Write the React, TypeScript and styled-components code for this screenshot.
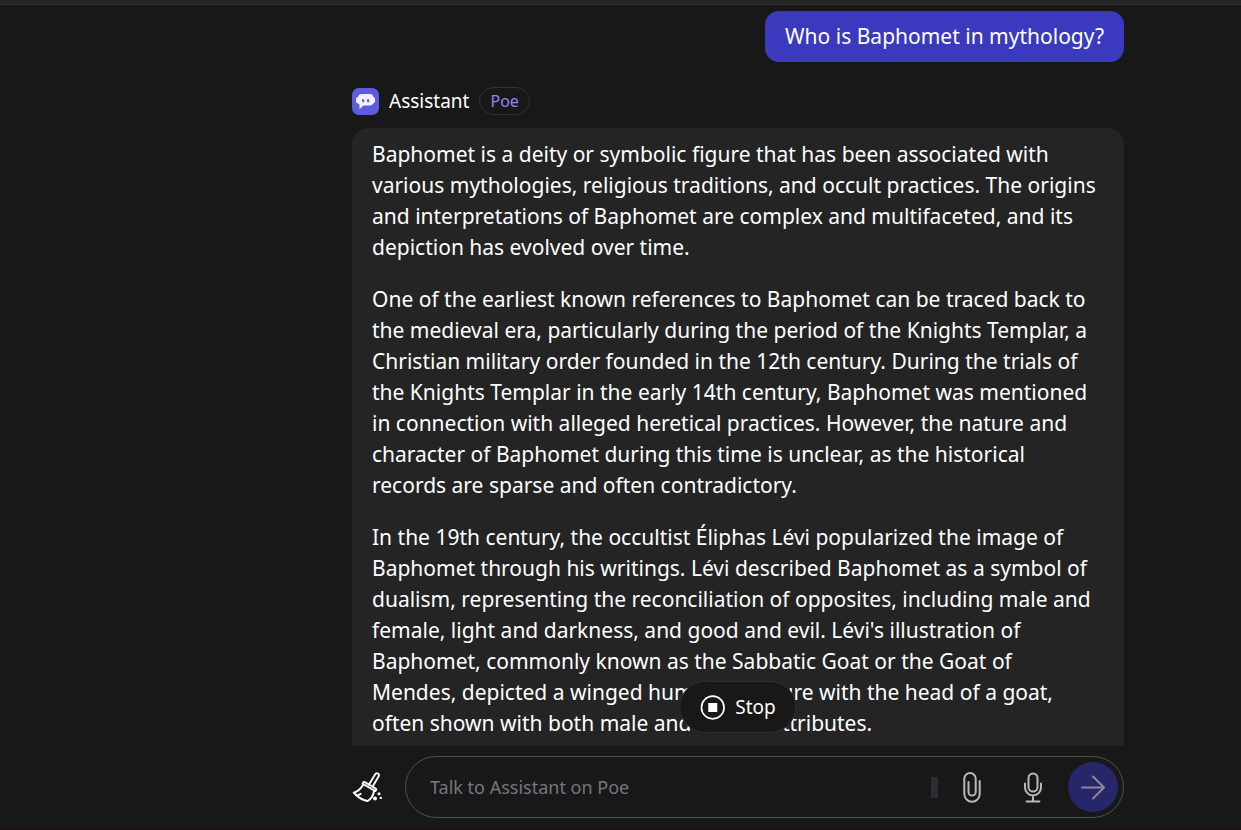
import React from "react";
import styled, { createGlobalStyle } from "styled-components";

const GlobalStyle = createGlobalStyle`
  *, *::before, *::after { box-sizing: border-box; }
  body {
    margin: 0;
    background: #181818;
    color: #ffffff;
    font-family: "Segoe UI", "Noto Sans", "Open Sans", sans-serif;
  }
  p { margin: 0; }
`;

const Page = styled.div`
  display: flex;
  flex-direction: column;
  height: 100vh;
  border-bottom: 3px solid #1b1317;
`;

const TopBar = styled.div`
  flex: none;
  height: 5px;
  background: #252525;
  border-bottom: 1px solid #2c2c35;
`;

const Body = styled.div`
  flex: 1;
  min-height: 0;
  display: grid;
  grid-template-columns: 235px minmax(0, 1fr);
`;

const Main = styled.main`
  grid-column: 2;
  display: flex;
  flex-direction: column;
  width: 100%;
  max-width: 772px;
  min-height: 0;
  margin: 0 auto;
`;

const ChatArea = styled.div`
  position: relative;
  flex: 1;
  min-height: 0;
`;

const Messages = styled.section`
  display: flex;
  flex-direction: column;
  height: 100%;
  padding-top: 6px;
  overflow: hidden;
`;

const UserMessage = styled.p`
  align-self: flex-end;
  flex: none;
  padding: 10px 20px;
  border-radius: 14px;
  background: #3b39bd;
  font-size: 21px;
  line-height: 31px;
`;

const BotHeader = styled.header`
  flex: none;
  display: flex;
  align-items: center;
  gap: 10px;
  margin-top: 25px;
  margin-bottom: 13px;
`;

const BotName = styled.span`
  font-size: 19px;
  line-height: 28px;
`;

const Tag = styled.span`
  padding: 0 10px;
  border: 1px solid #303036;
  border-radius: 14px;
  color: #9184f5;
  font-size: 16px;
  line-height: 26px;
`;

const BotMessage = styled.article`
  flex: none;
  display: flex;
  flex-direction: column;
  gap: 21px;
  padding: 11px 20px 20px;
  border-radius: 16px;
  background: #242424;
  font-size: 21px;
  line-height: 31px;
  white-space: pre-line;
`;

const StopButton = styled.button`
  position: absolute;
  left: 50%;
  bottom: 13px;
  transform: translateX(-50%);
  display: flex;
  align-items: center;
  gap: 10px;
  height: 52px;
  padding: 0 20px;
  border: 1px solid #2c2c35;
  border-radius: 26px;
  background: #181818;
  color: #ffffff;
  font: inherit;
  font-size: 19px;
`;

const Composer = styled.form`
  flex: none;
  display: flex;
  align-items: center;
  gap: 22px;
  padding: 10px 0 9px;
`;

const IconButton = styled.button`
  flex: none;
  display: flex;
  padding: 0;
  border: 0;
  background: none;
  color: ${(p) => p.color ?? "#ffffff"};
`;

const InputShell = styled.div`
  flex: 1;
  min-width: 0;
  display: flex;
  align-items: center;
  height: 62px;
  padding: 0 5px 0 24px;
  border: 1px solid #4a504f;
  border-radius: 31px;
`;

const TextInput = styled.input`
  flex: 1;
  min-width: 0;
  padding: 0;
  border: 0;
  outline: 0;
  background: none;
  color: #ffffff;
  font: inherit;
  font-size: 18px;
  &::placeholder { color: #74777f; opacity: 1; }
`;

const ScrollThumb = styled.span`
  width: 7px;
  height: 21px;
  background: #2c2c37;
`;

const Tools = styled.div`
  display: flex;
  align-items: center;
  gap: 43px;
  margin: 0 26px 0 25px;
`;

const SendButton = styled(IconButton)`
  align-items: center;
  justify-content: center;
  width: 50px;
  height: 50px;
  border-radius: 50%;
  background: #28266a;
`;

const paragraphs = [
  `Baphomet is a deity or symbolic figure that has been associated with
various mythologies, religious traditions, and occult practices. The origins
and interpretations of Baphomet are complex and multifaceted, and its
depiction has evolved over time.`,
  `One of the earliest known references to Baphomet can be traced back to
the medieval era, particularly during the period of the Knights Templar, a
Christian military order founded in the 12th century. During the trials of
the Knights Templar in the early 14th century, Baphomet was mentioned
in connection with alleged heretical practices. However, the nature and
character of Baphomet during this time is unclear, as the historical
records are sparse and often contradictory.`,
  `In the 19th century, the occultist Éliphas Lévi popularized the image of
Baphomet through his writings. Lévi described Baphomet as a symbol of
dualism, representing the reconciliation of opposites, including male and
female, light and darkness, and good and evil. Lévi's illustration of
Baphomet, commonly known as the Sabbatic Goat or the Goat of
Mendes, depicted a winged humanoid figure with the head of a goat,
often shown with both male and female attributes.`,
];

const BotAvatar = () => (
  <svg width="27" height="27" viewBox="0 0 27 27" aria-hidden="true">
    <rect width="27" height="27" rx="7" fill="#5d5cde" />
    <rect x="4" y="9" width="19" height="6.500" rx="2.200" fill="#f1f1fb" />
    <path
      d="M10 6h7.500a4 4 0 0 1 4 4v3.500a4 4 0 0 1-4 4H11.500L7.500 21.300v-4.600A4 4 0 0 1 6 13.500V10a4 4 0 0 1 4-4z"
      fill="#f1f1fb"
    />
    <rect x="10" y="11" width="2.200" height="3.400" rx="1.100" fill="#5d5cde" />
    <rect x="15" y="11" width="2.200" height="3.400" rx="1.100" fill="#5d5cde" />
  </svg>
);

const BroomIcon = () => (
  <svg width="31" height="32" viewBox="0 0 31 32" fill="none" stroke="currentColor" strokeWidth="1.900" strokeLinecap="round" strokeLinejoin="round" aria-hidden="true">
    <path d="M17 13.500L23.200 3.300a2 2 0 0 1 3.500 2L20.600 15.500" />
    <path d="M12.700 11.100l11 6.400a1 1 0 0 1 .4 1.400l-.7 1.200-12.800-7.400.7-1.200a1 1 0 0 1 1.400-.4z" />
    <path d="M11.300 13.500C9 17.500 6 20.600 1.700 21.700c1.600 1.200 2 1.600 3 2.800 3 3 6.500 4.700 11 5.500 3.500-2 5.500-5.500 6.300-9.500" />
    <path d="M4 24.300c2.300.2 3.400-.3 4.700-1.500" />
    <circle cx="27" cy="22.700" r="1.500" fill="currentColor" stroke="none" />
    <circle cx="23" cy="27.500" r="2" fill="currentColor" stroke="none" />
    <circle cx="28.800" cy="26.900" r="1.200" fill="currentColor" stroke="none" />
  </svg>
);

const ClipIcon = () => (
  <svg width="18" height="31" viewBox="0 0 18 31" fill="none" stroke="currentColor" strokeWidth="2" strokeLinecap="round" aria-hidden="true">
    <path d="M16.700 9v13a7.700 7.700 0 0 1-15.400 0V6.800a5.700 5.700 0 0 1 11.400 0V20a3.600 3.600 0 0 1-7.200 0V10" />
  </svg>
);

const MicIcon = () => (
  <svg width="18" height="31" viewBox="0 0 18 31" fill="none" stroke="currentColor" strokeWidth="2" strokeLinecap="round" aria-hidden="true">
    <rect x="4.500" y="1.500" width="9" height="18" rx="4.500" />
    <path d="M1 11.500v4a8 8 0 0 0 16 0v-4M9 24v5M2.500 29.500h13" />
  </svg>
);

const SendIcon = () => (
  <svg width="24" height="25" viewBox="0 0 24 25" fill="none" stroke="currentColor" strokeWidth="2" strokeLinecap="round" strokeLinejoin="round" aria-hidden="true">
    <path d="M1 12.500h22M12 1.500l11 11-11 11" />
  </svg>
);

const StopIcon = () => (
  <svg width="25" height="25" viewBox="0 0 25 25" aria-hidden="true">
    <circle cx="12.500" cy="12.500" r="11.300" fill="none" stroke="currentColor" strokeWidth="1.700" />
    <rect x="8" y="8" width="9" height="9" fill="currentColor" />
  </svg>
);

export default function App() {
  return (
    <>
      <GlobalStyle />
      <Page>
        <TopBar />
        <Body>
          <Main>
            <ChatArea>
              <Messages>
                <UserMessage>Who is Baphomet in mythology?</UserMessage>
                <BotHeader>
                  <BotAvatar />
                  <BotName>Assistant</BotName>
                  <Tag>Poe</Tag>
                </BotHeader>
                <BotMessage>
                  {paragraphs.map((text) => (
                    <p key={text}>{text}</p>
                  ))}
                </BotMessage>
              </Messages>
              <StopButton type="button">
                <StopIcon />
                Stop
              </StopButton>
            </ChatArea>
            <Composer onSubmit={(e) => e.preventDefault()}>
              <IconButton type="button" aria-label="Clear context">
                <BroomIcon />
              </IconButton>
              <InputShell>
                <TextInput aria-label="Message" placeholder="Talk to Assistant on Poe" />
                <ScrollThumb />
                <Tools>
                  <IconButton type="button" color="#b4bab8" aria-label="Attach file">
                    <ClipIcon />
                  </IconButton>
                  <IconButton type="button" color="#b4bab8" aria-label="Voice message">
                    <MicIcon />
                  </IconButton>
                </Tools>
                <SendButton type="submit" color="#8b8796" aria-label="Send">
                  <SendIcon />
                </SendButton>
              </InputShell>
            </Composer>
          </Main>
        </Body>
      </Page>
    </>
  );
}
